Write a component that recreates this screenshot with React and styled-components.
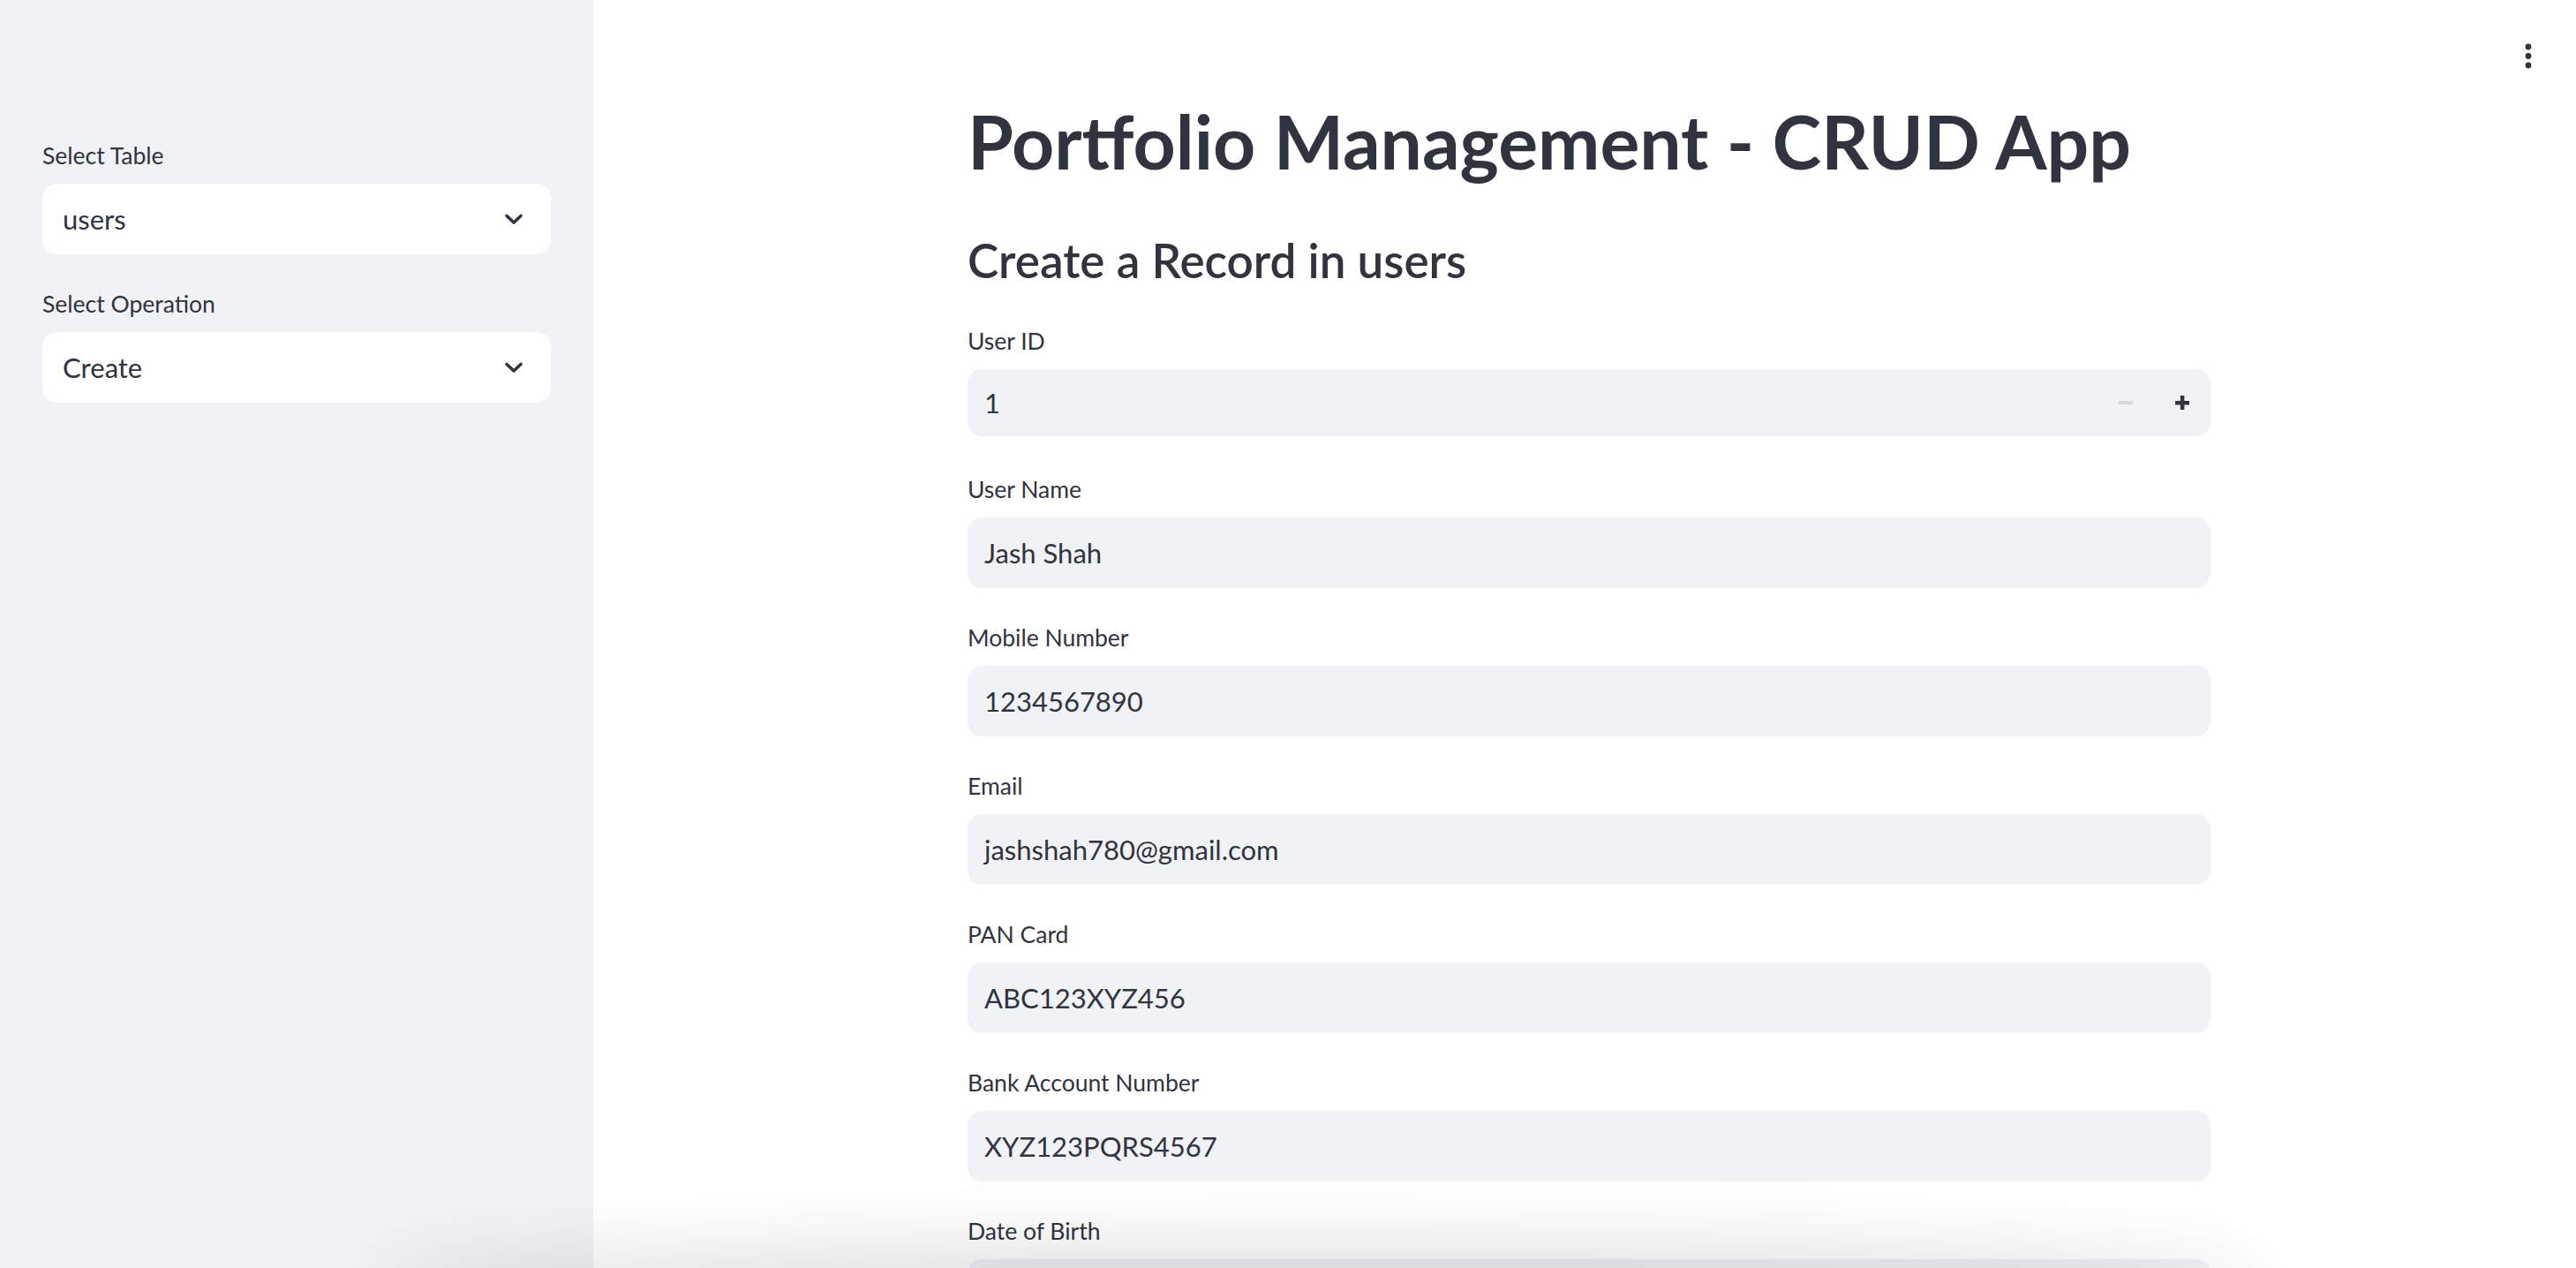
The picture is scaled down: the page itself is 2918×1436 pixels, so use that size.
import React from "react";
import styled, { createGlobalStyle } from "styled-components";

const GlobalStyle = createGlobalStyle`
  html, body {
    margin: 0;
    padding: 0;
    height: 100%;
    overflow: hidden;
  }
  body {
    font-family: Lato, "Noto Sans", sans-serif;
    color: #31333f;
    background: #ffffff;
  }
  #root {
    height: 100%;
  }
`;

const Page = styled.div`
  display: flex;
  height: 100vh;
  position: relative;
  overflow: hidden;
`;

const Sidebar = styled.aside`
  width: 672px;
  flex-shrink: 0;
  box-sizing: border-box;
  background: #f0f2f6;
  padding: 152px 48px 0;
  display: flex;
  flex-direction: column;
  gap: 32px;
`;

const Main = styled.main`
  flex: 1;
  position: relative;
  display: flex;
  justify-content: center;
  padding-left: 10px;
`;

const Content = styled.div`
  width: 1408px;
  display: flex;
  flex-direction: column;
`;

const Title = styled.h1`
  margin: 107px 0 0;
  font-size: 84px;
  line-height: 106px;
  font-weight: 700;
  white-space: nowrap;
`;

const Subheader = styled.h3`
  margin: 48px 0 0;
  font-size: 53px;
  line-height: 67px;
  font-weight: 600;
  white-space: nowrap;
`;

const Form = styled.div`
  margin-top: 34px;
  display: flex;
  flex-direction: column;
  gap: 32px;
`;

const Field = styled.div`
  display: flex;
  flex-direction: column;
`;

const Label = styled.label`
  height: 48px;
  margin-bottom: 8px;
  display: flex;
  align-items: center;
  font-size: 26.5px;
`;

const TextBox = styled.div`
  height: 80px;
  box-sizing: border-box;
  border-radius: 16px;
  background: ${(props) => (props.$light ? "#ffffff" : "#f0f2f6")};
  padding: 0 30px 0 ${(props) => (props.$light ? "23px" : "19px")};
  display: flex;
  align-items: center;
  justify-content: space-between;
  font-size: 31px;
  white-space: nowrap;
`;

const NumberBox = styled(TextBox)`
  height: 76px;
  margin-bottom: 4px;
  padding-right: 0;
`;

const Steppers = styled.div`
  display: flex;
  align-items: center;
`;

const StepButton = styled.button`
  width: 64px;
  height: 64px;
  border: none;
  background: transparent;
  padding: 0;
  display: flex;
  align-items: center;
  justify-content: center;
  color: ${(props) => (props.disabled ? "#d5d9e2" : "#31333f")};
`;

const MenuButton = styled.button`
  position: absolute;
  top: 44px;
  right: 34px;
  width: 40px;
  height: 40px;
  border: none;
  background: transparent;
  padding: 0;
  display: flex;
  align-items: center;
  justify-content: center;
  color: #31333f;
`;

const BottomShade = styled.div`
  position: absolute;
  left: 440px;
  right: 380px;
  bottom: -50px;
  height: 50px;
  border-radius: 50%;
  box-shadow: 0 -4px 80px 24px rgba(0, 0, 0, 0.13);
  pointer-events: none;
`;

function Chevron() {
  return (
    <svg width="24" height="24" viewBox="0 0 24 24" fill="none">
      <path
        d="M4 8.5l8 7.5 8-7.5"
        stroke="#31333f"
        strokeWidth="3.6"
        strokeLinecap="round"
        strokeLinejoin="round"
      />
    </svg>
  );
}

function Minus() {
  return (
    <svg width="16" height="16" viewBox="0 0 16 16">
      <rect x="0" y="6" width="16" height="4" fill="currentColor" />
    </svg>
  );
}

function Plus() {
  return (
    <svg width="16" height="16" viewBox="0 0 16 16">
      <rect x="0" y="6" width="16" height="4.5" fill="currentColor" />
      <rect x="5.8" y="0" width="4.5" height="16" fill="currentColor" />
    </svg>
  );
}

function Dots() {
  return (
    <svg width="8" height="30" viewBox="0 0 8 30">
      <circle cx="4" cy="4" r="3.4" fill="currentColor" />
      <circle cx="4" cy="14.5" r="3.4" fill="currentColor" />
      <circle cx="4" cy="25" r="3.4" fill="currentColor" />
    </svg>
  );
}

const sidebarSelects = [
  { label: "Select Table", value: "users" },
  { label: "Select Operation", value: "Create" },
];

const fields = [
  { label: "User Name", value: "Jash Shah" },
  { label: "Mobile Number", value: "1234567890" },
  { label: "Email", value: "jashshah780@gmail.com" },
  { label: "PAN Card", value: "ABC123XYZ456" },
  { label: "Bank Account Number", value: "XYZ123PQRS4567" },
  { label: "Date of Birth", value: "" },
];

export default function App() {
  return (
    <>
      <GlobalStyle />
      <Page>
        <Sidebar>
          {sidebarSelects.map((s) => (
            <Field key={s.label}>
              <Label>{s.label}</Label>
              <TextBox $light>
                <span>{s.value}</span>
                <Chevron />
              </TextBox>
            </Field>
          ))}
        </Sidebar>
        <Main>
          <Content>
            <Title>Portfolio Management - CRUD App</Title>
            <Subheader>Create a Record in users</Subheader>
            <Form>
              <Field>
                <Label>User ID</Label>
                <NumberBox>
                  <span>1</span>
                  <Steppers>
                    <StepButton disabled>
                      <Minus />
                    </StepButton>
                    <StepButton>
                      <Plus />
                    </StepButton>
                  </Steppers>
                </NumberBox>
              </Field>
              {fields.map((f) => (
                <Field key={f.label}>
                  <Label>{f.label}</Label>
                  <TextBox>{f.value}</TextBox>
                </Field>
              ))}
            </Form>
          </Content>
          <MenuButton>
            <Dots />
          </MenuButton>
        </Main>
        <BottomShade />
      </Page>
    </>
  );
}
